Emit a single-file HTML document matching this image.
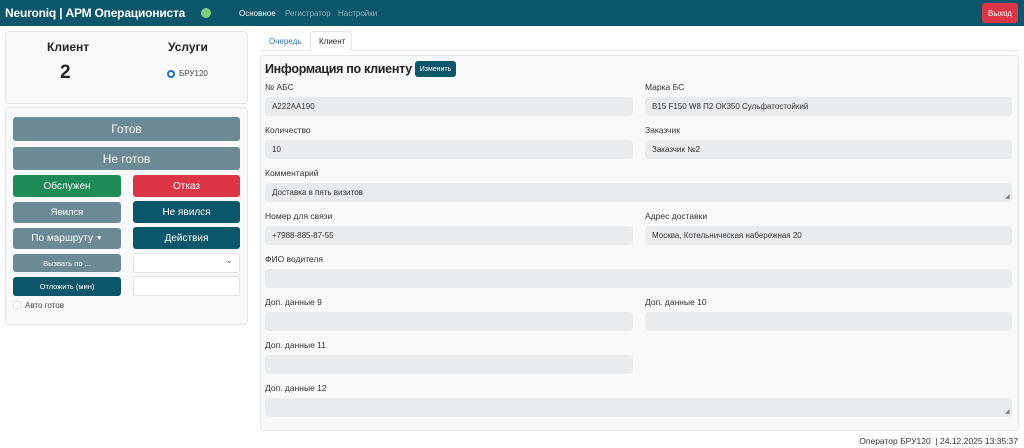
<!DOCTYPE html>
<html><head><meta charset="utf-8"><style>
*{box-sizing:border-box;margin:0;padding:0}
body{width:1024px;height:448px;background:#fff;font-family:"Liberation Sans","DejaVu Sans",sans-serif;position:relative;overflow:hidden;color:#212529}
.a{position:absolute;white-space:nowrap}
.nav{left:0;top:0;width:1024px;height:26px;background:#0b566b}
.card{background:#f8f9fa;border:1px solid #e4e6e9;border-radius:4px}
.btn{position:absolute;color:#fff;border-radius:3px;display:flex;align-items:center;justify-content:center;white-space:nowrap}
.g{background:#6c8a96}.d{background:#0b566b}
.lbl{position:absolute;font-size:8.5px;color:#333;white-space:nowrap}
.in{position:absolute;height:19px;background:#e9ecef;border-radius:4px;font-size:8px;padding-left:7px;display:flex;align-items:center;color:#333}
.L{left:265px;width:368px}.R{left:645px;width:367px}.F{left:265px;width:747px}
</style></head><body>
<div class="a nav"></div>
<div class="a" style="left:5px;top:6px;color:#fff;font-size:12px;font-weight:bold;letter-spacing:-0.2px">Neuroniq | АРМ Операциониста</div>
<div class="a" style="left:201px;top:8px;width:10px;height:10px;border-radius:50%;background:#7ed07e"></div>
<div class="a" style="left:239px;top:9px;font-size:8px;color:#fff">Основное</div>
<div class="a" style="left:285px;top:9px;font-size:8px;color:#8fb0bb">Регистратор</div>
<div class="a" style="left:338px;top:9px;font-size:8px;color:#8fb0bb">Настройки</div>
<div class="btn" style="left:982px;top:3px;width:36px;height:20px;background:#dc3545;font-size:8px">Выход</div>

<div class="a card" style="left:5px;top:31px;width:243px;height:73px"></div>
<div class="a" style="left:47px;top:40px;font-size:12px;font-weight:bold">Клиент</div>
<div class="a" style="left:60px;top:62px;font-size:19px;font-weight:bold">2</div>
<div class="a" style="left:168px;top:40px;font-size:12px;font-weight:bold">Услуги</div>
<div class="a" style="left:167px;top:70px;width:8px;height:8px;border-radius:50%;border:2.5px solid #1a6fe0;background:#fff"></div>
<div class="a" style="left:179px;top:69px;font-size:8px;color:#444">БРУ120</div>

<div class="a card" style="left:5px;top:107px;width:243px;height:218px"></div>
<div class="btn g" style="left:13px;top:117px;width:227px;height:24px;font-size:12px">Готов</div>
<div class="btn g" style="left:13px;top:147px;width:227px;height:23px;font-size:12px">Не готов</div>
<div class="btn" style="left:13px;top:175px;width:108px;height:22px;background:#1e8a55;font-size:10px">Обслужен</div>
<div class="btn" style="left:133px;top:175px;width:107px;height:22px;background:#dc3545;font-size:10px">Отказ</div>
<div class="btn g" style="left:13px;top:202px;width:108px;height:21px;font-size:9.5px">Явился</div>
<div class="btn d" style="left:133px;top:201px;width:107px;height:22px;font-size:10px">Не явился</div>
<div class="btn g" style="left:13px;top:228px;width:108px;height:21px;font-size:10px">По маршруту&nbsp;<span style="font-size:7px">▼</span></div>
<div class="btn d" style="left:133px;top:227px;width:107px;height:22px;font-size:10px">Действия</div>
<div class="btn g" style="left:13px;top:254px;width:108px;height:18px;font-size:7.5px">Вызвать по ...</div>
<div class="a" style="left:133px;top:253px;width:107px;height:20px;background:#fff;border:1px solid #dee2e6;border-radius:3px"></div>
<div class="a" style="left:226px;top:256px;font-size:8px;color:#555">⌄</div>
<div class="btn d" style="left:13px;top:277px;width:108px;height:19px;font-size:7.5px">Отложить (мин)</div>
<div class="a" style="left:133px;top:276px;width:107px;height:20px;background:#fff;border:1px solid #dee2e6;border-radius:3px"></div>
<div class="a" style="left:13px;top:301px;width:8px;height:8px;border-radius:2px;border:1px solid #e3e3e3;background:#fff"></div>
<div class="a" style="left:25px;top:301px;font-size:8px;color:#444">Авто готов</div>

<div class="a" style="left:260px;top:50px;width:759px;height:1px;background:#e4e6e9"></div>
<div class="a" style="left:269px;top:37px;font-size:8px;color:#2f72b8">Очередь</div>
<div class="a" style="left:310px;top:31px;width:42px;height:20px;background:#fff;border:1px solid #e4e6e9;border-bottom:none;border-radius:3px 3px 0 0"></div>
<div class="a" style="left:319px;top:37px;font-size:8px">Клиент</div>
<div class="a card" style="left:260px;top:55px;width:759px;height:376px"></div>
<div class="a" style="left:265px;top:62px;font-size:12.5px;font-weight:bold;color:#222;letter-spacing:-0.3px">Информация по клиенту</div>
<div class="btn d" style="left:415px;top:61px;width:41px;height:16px;font-size:7px">Изменить</div>

<div class="lbl" style="left:265px;top:82px">№ АБС</div>
<div class="lbl" style="left:645px;top:82px">Марка БС</div>
<div class="in L" style="top:97px">A222AA190</div>
<div class="in R" style="top:97px">B15 F150 W8 П2 ОК350 Сульфатостойкий</div>
<div class="lbl" style="left:265px;top:125px">Количество</div>
<div class="lbl" style="left:645px;top:125px">Заказчик</div>
<div class="in L" style="top:140px">10</div>
<div class="in R" style="top:140px">Заказчик №2</div>
<div class="lbl" style="left:265px;top:168px">Комментарий</div>
<div class="in F" style="top:183px">Доставка в пять визитов</div>
<div class="lbl" style="left:265px;top:211px">Номер для связи</div>
<div class="lbl" style="left:645px;top:211px">Адрес доставки</div>
<div class="in L" style="top:226px">+7988-885-87-55</div>
<div class="in R" style="top:226px">Москва, Котельническая набережная 20</div>
<div class="lbl" style="left:265px;top:254px">ФИО водителя</div>
<div class="in F" style="top:269px"></div>
<div class="lbl" style="left:265px;top:297px">Доп. данные 9</div>
<div class="lbl" style="left:645px;top:297px">Доп. данные 10</div>
<div class="in L" style="top:312px"></div>
<div class="in R" style="top:312px"></div>
<div class="lbl" style="left:265px;top:340px">Доп. данные 11</div>
<div class="in L" style="top:355px"></div>
<div class="lbl" style="left:265px;top:383px">Доп. данные 12</div>
<div class="in F" style="top:398px"></div>
<div class="a" style="left:1005px;top:193px;font-size:6px;color:#777">◢</div>
<div class="a" style="left:1005px;top:408px;font-size:6px;color:#777">◢</div>

<div class="a" style="right:6px;top:436px;font-size:8.5px;color:#333">Оператор БРУ120 &nbsp;| 24.12.2025 13:35:37</div>
</body></html>
